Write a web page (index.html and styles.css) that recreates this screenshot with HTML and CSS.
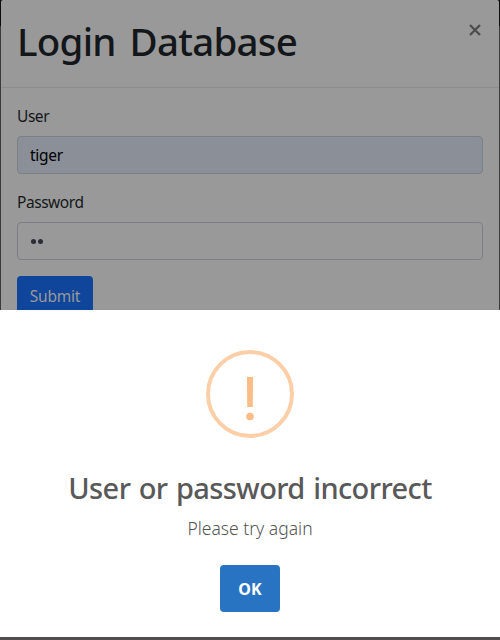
FILE: index.html
```html
<!DOCTYPE html>
<html lang="en">
<head>
<meta charset="utf-8">
<title>Login Database</title>
<link rel="stylesheet" href="styles.css">
</head>
<body>
<main class="login">
  <header class="login-header">
    <h1 class="login-title"><span>Login Database</span></h1>
    <button class="close" aria-label="Close"><svg width="12" height="12" viewBox="0 0 12 12"><path d="M1 1l10 10M11 1L1 11" fill="none" stroke="#4d4d4d" stroke-width="2.3"/></svg></button>
  </header>
  <form class="login-form">
    <label class="label label-user"><span>User</span></label>
    <div class="field field-filled"><span>tiger</span></div>
    <label class="label label-password"><span>Password</span></label>
    <div class="field"><i class="dot"></i><i class="dot"></i></div>
    <button class="submit" type="button"><span>Submit</span></button>
  </form>
</main>
<section class="alert" role="alertdialog">
  <svg class="warning" width="88" height="88" viewBox="0 0 88 88"><circle cx="44" cy="44" r="42" fill="none" stroke="#fccfa9" stroke-width="4"/><path d="M41 27h6l-.2 30h-5.6z" fill="#fabd88"/><circle cx="44" cy="66.5" r="3.8" fill="#fabd88"/></svg>
  <h2 class="alert-title"><span>User or password incorrect</span></h2>
  <p class="alert-text"><span>Please try again</span></p>
  <button class="ok"><span>OK</span></button>
</section>
</body>
</html>
```
FILE: styles.css
```css
* { box-sizing: border-box; }
body {
  margin: 0;
  width: 500px;
  height: 640px;
  overflow: hidden;
  display: flex;
  flex-direction: column;
  background: linear-gradient(#0d0d0d 26px, #3b3b3c 26px, #3b3b3c 310px, #504d4e 310px);
  font-family: "Noto Sans", "Open Sans", sans-serif;
}
h1, h2, p { margin: 0; }
button { border: 0; padding: 0; font-family: inherit; }
.login {
  height: 310px;
  margin: 0 1px;
  overflow: hidden;
  background: #999;
  border-radius: 2px 2px 0 0;
}
.login-header {
  height: 88px;
  padding: 0 18px 0 16px;
  display: flex;
  justify-content: space-between;
  align-items: flex-start;
  border-bottom: 1px solid #8b8c8d;
}
.login-title {
  padding-top: 17px;
  font-size: 38.5px;
  line-height: 48px;
  font-weight: 500;
  color: #14171a;
  letter-spacing: -0.75px;
  word-spacing: 4.5px;
}
.close { margin-top: 24px; width: 12px; height: 12px; background: none; }
.close svg { display: block; }
.login-form { padding: 16px 16px 0; display: flex; flex-direction: column; align-items: flex-start; }
.label {
  height: 24px;
  margin-bottom: 8px;
  font-size: 15.5px;
  line-height: 24px;
  color: #14171a;
  letter-spacing: -0.45px;
}
.field {
  width: 466px;
  height: 38px;
  margin-bottom: 16px;
  padding: 0 12px;
  display: flex;
  align-items: center;
  border: 1px solid #7c8085;
  border-radius: 4px;
  font-size: 15.5px;
  color: #000;
  letter-spacing: -0.3px;
}
.field-filled { background: #8b8f98; }
.dot { width: 5px; height: 5px; margin: 1px 1px 0 1px; border-radius: 50%; background: #2a2d38; }
.submit {
  width: 76px;
  height: 38px;
  padding-top: 1px;
  border-radius: 4px;
  background: #0f469c;
  color: #999;
  font-size: 15.5px;
  line-height: 39px;
  letter-spacing: -0.2px;
}
.alert {
  height: 327px;
  padding-top: 40px;
  display: flex;
  flex-direction: column;
  align-items: center;
  background: #fff;
}
.warning { display: block; }
.alert-title {
  margin-top: 32px;
  font-size: 29px;
  line-height: 36px;
  font-weight: 500;
  color: #595959;
  white-space: nowrap;
  letter-spacing: -0.6px;
  word-spacing: 1.5px;
}
.alert-text { margin-top: 9px; font-size: 17.5px; line-height: 26px; font-weight: 300; color: #545454; }
.ok {
  width: 60px;
  height: 47px;
  margin-top: 24px;
  border-radius: 4px;
  background: #2874c2;
  color: #fff;
  font-size: 16px;
  font-weight: 700;
}
```
